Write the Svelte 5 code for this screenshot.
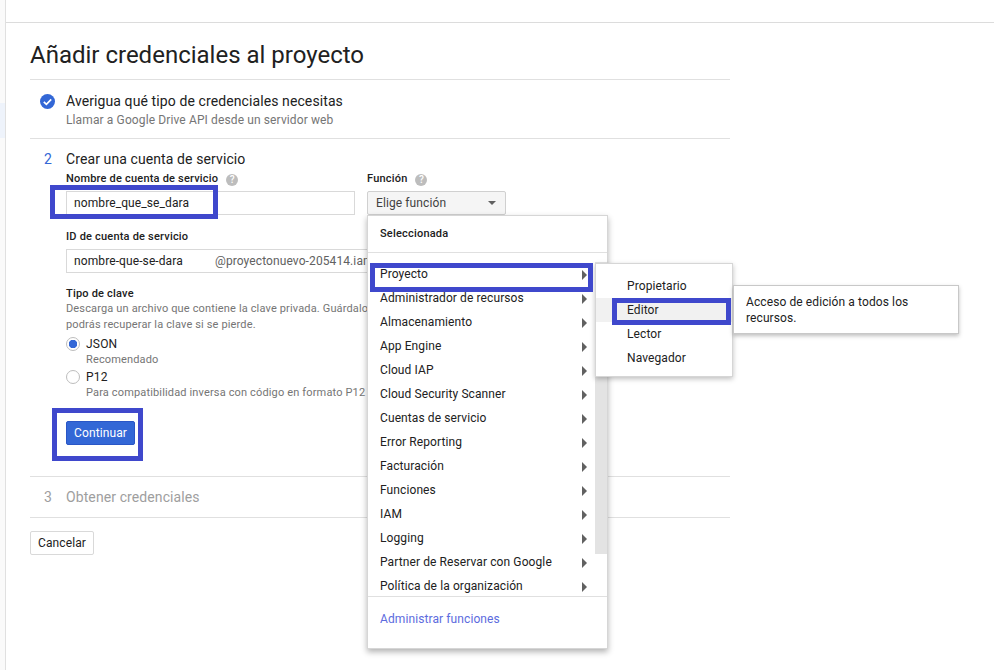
<script>
    const roles = [
        "Proyecto", "Administrador de recursos", "Almacenamiento", "App Engine", "Cloud IAP",
        "Cloud Security Scanner", "Cuentas de servicio", "Error Reporting", "Facturación",
        "Funciones", "IAM", "Logging", "Partner de Reservar con Google", "Política de la organización"
    ];
    const projectRoles = ["Propietario", "Editor", "Lector", "Navegador"];
</script>

<div class="page">
    <aside class="rail"><div class="rail__active"></div></aside>

    <div class="main">
        <div class="topbar"></div>

        <div class="content">
            <h1>Añadir credenciales al proyecto</h1>

            <section class="step step--done">
                <div class="step__mark">
                    <svg width="15" height="15" viewBox="0 0 15 15">
                        <circle cx="7.5" cy="7.5" r="7.5" fill="#3367d6"/>
                        <path d="M3.8 7.8l2.6 2.6 4.8-5" fill="none" stroke="#fff" stroke-width="1.7"/>
                    </svg>
                </div>
                <div>
                    <div class="step__title">Averigua qué tipo de credenciales necesitas</div>
                    <div class="step__sub">Llamar a Google Drive API desde un servidor web</div>
                </div>
            </section>

            <section class="step step--current">
                <div class="step__num">2</div>
                <div class="step__body">
                    <div class="step__title">Crear una cuenta de servicio</div>

                    <div class="fields">
                        <div class="field field--name">
                            <div class="label">Nombre de cuenta de servicio <span class="help">?</span></div>
                            <div class="input">nombre_que_se_dara</div>
                        </div>
                        <div class="field">
                            <div class="label">Función <span class="help">?</span></div>
                            <div class="select-wrap">
                                <div class="select">Elige función <span class="caret"></span></div>

                                <div class="menu">
                                    <div class="menu__head">Seleccionada</div>
                                    <div class="menu__list">
                                        <div class="menu__items">
                                            {#each roles as role}
                                                <div class="menu__item">{role}<span class="arrow"></span></div>
                                            {/each}
                                        </div>
                                        <div class="scroll"><div class="scroll__thumb"></div></div>
                                    </div>
                                    <div class="menu__foot">Administrar funciones</div>

                                    <div class="submenu">
                                        {#each projectRoles as role}
                                            <div class="submenu__item" class:submenu__item--on={role === "Editor"}>{role}</div>
                                        {/each}
                                        <div class="tip">Acceso de edición a todos los recursos.</div>
                                    </div>
                                </div>
                            </div>
                        </div>
                    </div>

                    <div class="label label--id">ID de cuenta de servicio</div>
                    <div class="input input--id"><span class="id-name">nombre-que-se-dara</span><span class="id-domain">@proyectonuevo-205414.iam.gserviceaccount.com</span></div>

                    <div class="label label--key">Tipo de clave</div>
                    <p class="desc">Descarga un archivo que contiene la clave privada. Guárdalo en un lugar seguro; no podrás recuperar la clave si se pierde.</p>

                    <div class="radio">
                        <span class="radio__dot radio__dot--on"></span>
                        <div>
                            <div class="radio__name">JSON</div>
                            <div class="radio__hint">Recomendado</div>
                        </div>
                    </div>
                    <div class="radio">
                        <span class="radio__dot"></span>
                        <div>
                            <div class="radio__name">P12</div>
                            <div class="radio__hint">Para compatibilidad inversa con código en formato P12</div>
                        </div>
                    </div>

                    <button class="btn btn--primary">Continuar</button>
                </div>
            </section>

            <section class="step step--todo">
                <div class="step__num">3</div>
                <div class="step__title">Obtener credenciales</div>
            </section>

            <button class="btn btn--cancel">Cancelar</button>
        </div>
    </div>

    <!-- boxes painted on top of the screenshot -->
    <div class="mark mark--name"></div>
    <div class="mark mark--continue"></div>
    <div class="mark mark--project"></div>
    <div class="mark mark--editor"></div>
</div>

<style>
    :global(body) {
        background: #fff;
    }

    .page {
        position: relative;
        display: flex;
        width: 994px;
        height: 670px;
        overflow: hidden;
        font-family: Roboto, sans-serif;
        color: #212121;
    }

    .rail {
        width: 5px;
        flex: none;
        background: #fafafa;
        border-right: 1px solid #e0e0e0;
        padding-top: 103px;
        box-sizing: content-box;
    }
    .rail__active {
        height: 35px;
        background: #eef3fb;
    }

    .main {
        flex: 1;
        min-width: 0;
    }

    .topbar {
        height: 22px;
        border-bottom: 1px solid #dcdcdc;
    }

    .content {
        width: 700px;
        margin-left: 24px;
    }

    h1 {
        margin: 0;
        height: 57px;
        padding-top: 18px;
        box-sizing: border-box;
        font-size: 24px;
        font-weight: 400;
        line-height: 28px;
        border-bottom: 1px solid #e0e0e0;
    }

    .step {
        display: flex;
        border-bottom: 1px solid #e0e0e0;
        box-sizing: border-box;
    }
    .step--done {
        height: 59px;
        padding-top: 11px;
    }
    .step--current {
        height: 338px;
        padding-top: 10px;
    }
    .step--todo {
        height: 41px;
        padding-top: 10px;
        color: #9e9e9e;
    }

    .step__mark {
        width: 36px;
        padding: 3px 0 0 10px;
        box-sizing: border-box;
    }
    .step__num {
        width: 36px;
        padding-left: 14px;
        box-sizing: border-box;
        font-size: 14px;
        line-height: 20px;
        color: #3367d6;
    }
    .step--todo .step__num {
        color: #9e9e9e;
    }
    .step__title {
        font-size: 14px;
        line-height: 20px;
        letter-spacing: 0.1px;
    }
    .step__sub {
        font-size: 12px;
        line-height: 16px;
        margin-top: 1px;
        letter-spacing: 0.12px;
        color: #757575;
    }
    .step__body {
        flex: 1;
        min-width: 0;
    }

    .fields {
        display: flex;
        margin-top: 3px;
    }
    .field--name {
        width: 301px;
    }

    .label {
        font-size: 11px;
        line-height: 14px;
        font-weight: 500;
        letter-spacing: 0.2px;
        height: 19px;
    }
    .help {
        display: inline-block;
        width: 12px;
        height: 12px;
        margin-left: 5px;
        border-radius: 50%;
        background: #bdbdbd;
        color: #fff;
        font-size: 10px;
        line-height: 12px;
        text-align: center;
        vertical-align: -1px;
    }

    .input {
        width: 289px;
        height: 24px;
        border: 1px solid #d9d9d9;
        box-sizing: border-box;
        padding-left: 7px;
        font-size: 12px;
        line-height: 22px;
        letter-spacing: 0.1px;
        white-space: nowrap;
        overflow: hidden;
    }
    .input--id {
        width: 520px;
    }
    .id-name {
        display: inline-block;
        width: 141px;
    }
    .id-domain {
        color: #616161;
    }
    .label--id {
        margin-top: 15px;
    }
    .label--key {
        margin-top: 14px;
        height: auto;
    }

    .desc {
        margin: 0;
        width: 440px;
        font-size: 11px;
        line-height: 16px;
        letter-spacing: 0.15px;
        color: #757575;
    }

    .radio {
        display: flex;
        gap: 6px;
        margin-top: 3px;
    }
    .radio + .radio {
        margin-top: 1px;
    }
    .radio__dot {
        width: 14px;
        height: 14px;
        margin-top: 1px;
        border: 1px solid #bdbdbd;
        border-radius: 50%;
        background: #fff;
        box-sizing: border-box;
    }
    .radio__dot--on {
        background: radial-gradient(circle, #3367d6 0 4px, #fff 4.5px);
    }
    .radio__name {
        font-size: 12px;
        line-height: 16px;
        letter-spacing: 0.2px;
    }
    .radio__hint {
        font-size: 11px;
        line-height: 16px;
        letter-spacing: 0.15px;
        color: #757575;
    }

    .btn {
        display: block;
        height: 24px;
        padding: 0;
        border-radius: 2px;
        font-family: inherit;
        font-size: 12px;
        letter-spacing: 0.1px;
    }
    .btn--primary {
        width: 69px;
        margin-top: 20px;
        background: #3367d6;
        border: 1px solid #2a56c6;
        color: #fff;
    }
    .btn--cancel {
        width: 64px;
        margin-top: 13px;
        background: #fff;
        border: 1px solid #d9d9d9;
        color: #212121;
    }

    .select-wrap {
        position: relative;
    }
    .select {
        display: flex;
        align-items: center;
        justify-content: space-between;
        width: 139px;
        height: 24px;
        padding: 0 9px 0 8px;
        box-sizing: border-box;
        background: #f5f5f5;
        border: 1px solid #d0d0d0;
        border-radius: 2px;
        font-size: 12px;
        letter-spacing: 0.1px;
        color: #424242;
    }
    .caret {
        width: 0;
        height: 0;
        border-left: 4px solid transparent;
        border-right: 4px solid transparent;
        border-top: 4px solid #616161;
    }

    .menu {
        position: absolute;
        top: 24px;
        left: 0;
        width: 241px;
        height: 434px;
        box-sizing: border-box;
        background: #fff;
        border: 1px solid #d6d6d6;
        box-shadow: 0 3px 6px rgba(0, 0, 0, 0.3);
        font-size: 12px;
    }
    .menu__head {
        height: 37px;
        padding: 11px 0 0 12px;
        box-sizing: border-box;
        font-size: 11px;
        line-height: 14px;
        font-weight: 500;
        letter-spacing: 0.2px;
        border-bottom: 1px solid #e0e0e0;
    }
    .menu__list {
        display: flex;
        padding-top: 9px;
        height: 344px;
        box-sizing: border-box;
        border-bottom: 1px solid #e0e0e0;
    }
    .menu__items {
        width: 227px;
        height: 336px;
    }
    .menu__item {
        display: flex;
        align-items: center;
        justify-content: space-between;
        height: 24px;
        padding: 0 8px 0 12px;
        letter-spacing: 0.1px;
    }
    .arrow {
        width: 0;
        height: 0;
        border-top: 5px solid transparent;
        border-bottom: 5px solid transparent;
        border-left: 5px solid #616161;
        margin-top: 2px;
    }
    .scroll {
        width: 12px;
        height: 292px;
    }
    .scroll__thumb {
        height: 100%;
        background: #e3e3e3;
    }
    .menu__foot {
        padding: 14px 0 0 12px;
        line-height: 16px;
        letter-spacing: 0.1px;
        color: #5c6bde;
    }

    .submenu {
        position: absolute;
        top: 47px;
        left: 227px;
        width: 138px;
        height: 114px;
        padding-top: 10px;
        box-sizing: border-box;
        background: #fff;
        border: 1px solid #d6d6d6;
        box-shadow: 0 2px 5px rgba(0, 0, 0, 0.25);
    }
    .submenu__item {
        height: 24px;
        line-height: 24px;
        padding-left: 31px;
        letter-spacing: 0.1px;
    }
    .submenu__item--on {
        background: #f1f1f1;
    }

    .tip {
        position: absolute;
        top: 21px;
        left: 137px;
        width: 226px;
        height: 49px;
        padding: 8px 12px;
        box-sizing: border-box;
        background: #fff;
        border: 1px solid #c8c8c8;
        box-shadow: 0 2px 4px rgba(0, 0, 0, 0.25);
        line-height: 16px;
        letter-spacing: 0.1px;
    }

    .mark {
        position: absolute;
        border: 5px solid #3f48cc;
        box-sizing: border-box;
    }
    .mark--name {
        left: 50px;
        top: 185px;
        width: 168px;
        height: 34px;
    }
    .mark--continue {
        left: 52px;
        top: 408px;
        width: 91px;
        height: 53px;
    }
    .mark--project {
        left: 370px;
        top: 263px;
        width: 223px;
        height: 29px;
    }
    .mark--editor {
        left: 612px;
        top: 298px;
        width: 119px;
        height: 27px;
    }
</style>
